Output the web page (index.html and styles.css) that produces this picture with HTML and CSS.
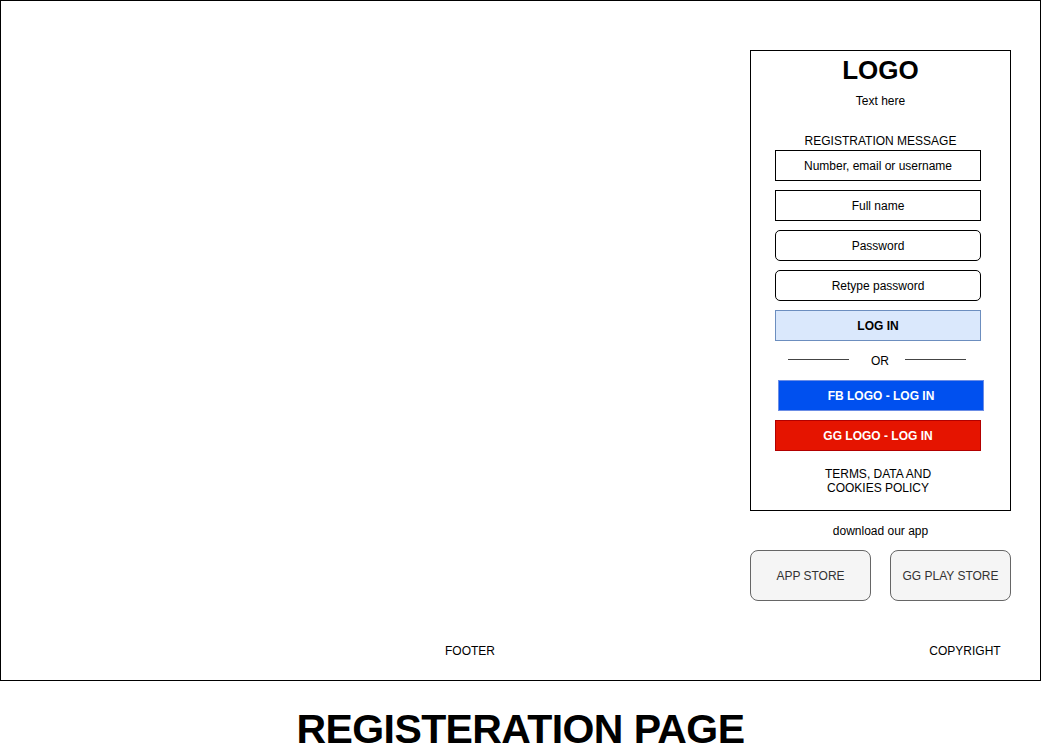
FILE: index.html
```html
<!DOCTYPE html>
<html>
<head>
<meta charset="utf-8">
<link rel="stylesheet" href="styles.css">
</head>
<body>
<div class="frame">
  <div class="side">
    <div class="card">
      <div class="logo">LOGO</div>
      <div class="tagline">Text here</div>
      <div class="regmsg">REGISTRATION MESSAGE</div>
      <div class="field first">Number, email or username</div>
      <div class="field">Full name</div>
      <div class="field round">Password</div>
      <div class="field round">Retype password</div>
      <div class="field login">LOG IN</div>
      <div class="or-row">
        <span class="or-line"></span>
        <span class="or-text">OR</span>
        <span class="or-line"></span>
      </div>
      <div class="social fb">FB LOGO - LOG IN</div>
      <div class="social gg">GG LOGO - LOG IN</div>
      <div class="terms">TERMS, DATA AND<br>COOKIES POLICY</div>
    </div>
    <div class="download">download our app</div>
    <div class="stores">
      <div class="store">APP STORE</div>
      <div class="store">GG PLAY STORE</div>
    </div>
  </div>
  <div class="footer">
    <span class="foot-left">FOOTER</span>
    <span class="foot-right">COPYRIGHT</span>
  </div>
</div>
<div class="title">REGISTERATION PAGE</div>
</body>
</html>
```
FILE: styles.css
```css
html, body {
  margin: 0;
  padding: 0;
  background: #ffffff;
}
body {
  font-family: "Liberation Sans", Arial, sans-serif;
  font-size: 12px;
  line-height: 14px;
  color: #000;
}
.frame {
  box-sizing: border-box;
  width: 1041px;
  height: 681px;
  border: 1px solid #000;
  display: flex;
  flex-direction: column;
}
.side {
  width: 261px;
  margin-top: 49px;
  margin-left: 749px;
  display: flex;
  flex-direction: column;
}
.card {
  box-sizing: border-box;
  width: 261px;
  height: 461px;
  border: 1px solid #000;
  display: flex;
  flex-direction: column;
  align-items: flex-start;
}
.logo {
  align-self: stretch;
  text-align: center;
  font-size: 26px;
  line-height: 30px;
  font-weight: bold;
  margin-top: 4px;
}
.tagline {
  align-self: stretch;
  text-align: center;
  margin-top: 9px;
}
.regmsg {
  align-self: stretch;
  text-align: center;
  margin-top: 26px;
}
.field {
  box-sizing: border-box;
  width: 206px;
  height: 31px;
  border: 1px solid #000;
  margin-left: 24px;
  margin-top: 9px;
  display: flex;
  align-items: center;
  justify-content: center;
}
.field.first {
  margin-top: 2px;
}
.field.round {
  border-radius: 5px;
}
.field.login {
  background: #dae8fc;
  border-color: #6c8ebf;
  font-weight: bold;
}
.or-row {
  display: flex;
  align-items: flex-start;
  margin-top: 13px;
  margin-left: 37px;
  height: 14px;
}
.or-line {
  width: 61px;
  height: 1px;
  background: #444;
  margin-top: 5px;
}
.or-text {
  width: 56px;
  box-sizing: border-box;
  padding-left: 6px;
  text-align: center;
}
.social {
  box-sizing: border-box;
  width: 206px;
  height: 31px;
  display: flex;
  align-items: center;
  justify-content: center;
  color: #fff;
  font-weight: bold;
}
.social.fb {
  background: #0050ef;
  border: 1px solid #6b8de6;
  margin-top: 12px;
  margin-left: 27px;
}
.social.gg {
  background: #e51400;
  border: 1px solid #b20000;
  margin-top: 9px;
  margin-left: 24px;
}
.terms {
  width: 206px;
  margin-left: 24px;
  margin-top: 16px;
  text-align: center;
}
.download {
  text-align: center;
  margin-top: 13px;
}
.stores {
  display: flex;
  justify-content: space-between;
  margin-top: 12px;
}
.store {
  box-sizing: border-box;
  width: 121px;
  height: 51px;
  border: 1px solid #666;
  border-radius: 8px;
  background: #f5f5f5;
  color: #333;
  display: flex;
  align-items: center;
  justify-content: center;
}
.footer {
  display: flex;
  margin-top: 43px;
  margin-left: 409px;
}
.foot-left,
.foot-right {
  width: 120px;
  text-align: center;
}
.foot-right {
  margin-left: 375px;
}
.title {
  width: 1041px;
  text-align: center;
  font-size: 41px;
  line-height: 48px;
  font-weight: bold;
  letter-spacing: -0.6px;
  margin-top: 24px;
}
```
